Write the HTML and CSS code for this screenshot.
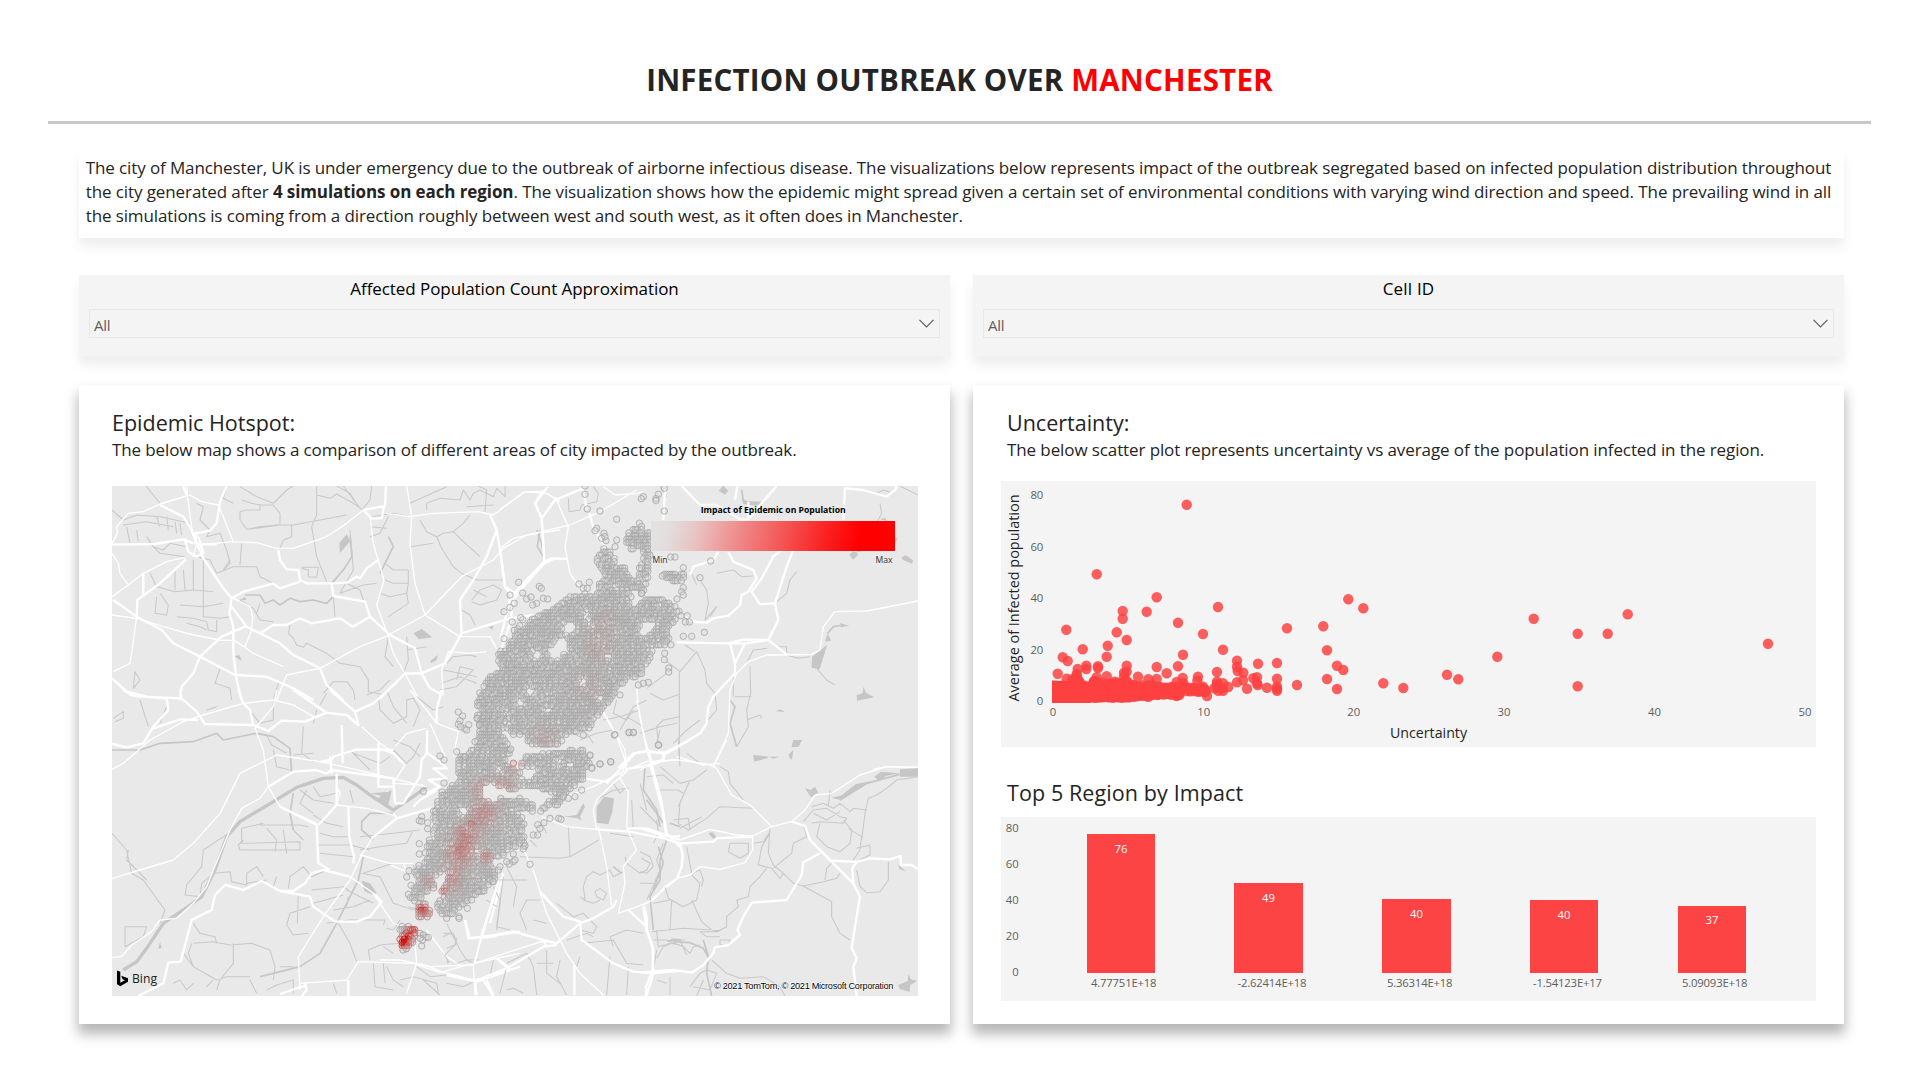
FILE: index.html
```html
<!DOCTYPE html>
<html lang="en">
<head>
<meta charset="utf-8">
<title>Infection Outbreak over Manchester</title>
<link rel="stylesheet" href="styles.css">
</head>
<body>
<header class="header">
  <h1 class="title">INFECTION OUTBREAK OVER <span class="accent">MANCHESTER</span></h1>
</header>
<main class="content">
  <section class="intro">
    <p class="intro-line">The city of Manchester, UK is under emergency due to the outbreak of airborne infectious disease. The visualizations below represents impact of the outbreak segregated based on infected population distribution throughout</p>
    <p class="intro-line middle">the city generated after <b>4 simulations on each region</b>. The visualization shows how the epidemic might spread given a certain set of environmental conditions with varying wind direction and speed. The prevailing wind in all</p>
    <p class="intro-line last">the simulations is coming from a direction roughly between west and south west, as it often does in Manchester.</p>
  </section>

  <section class="filters">
    <div class="filter">
      <h2 class="filter-title">Affected Population Count Approximation</h2>
      <div class="select"><span>All</span><svg class="chevron" viewBox="0 0 15 9"><path d="M.5.8 7.5 7.8 14.5.8"/></svg></div>
    </div>
    <div class="filter">
      <h2 class="filter-title short">Cell ID</h2>
      <div class="select"><span>All</span><svg class="chevron" viewBox="0 0 15 9"><path d="M.5.8 7.5 7.8 14.5.8"/></svg></div>
    </div>
  </section>

  <section class="panels">
    <article class="panel panel-map">
      <h2 class="heading">Epidemic Hotspot:</h2>
      <p class="sub">The below map shows a comparison of different areas of city impacted by the outbreak.</p>
      <svg class="map" viewBox="112 486 806 510">
        <defs>
          <linearGradient id="impact" x1="0" x2="1" y1="0" y2="0.03">
            <stop offset="0" stop-color="#e3e3e3"/><stop offset=".08" stop-color="#e3dede"/>
            <stop offset=".2" stop-color="#e8c2c2"/><stop offset=".34" stop-color="#ee9494"/>
            <stop offset=".47" stop-color="#f26e6e"/><stop offset=".61" stop-color="#f64545"/>
            <stop offset=".75" stop-color="#fb1c1c"/><stop offset=".87" stop-color="#f00"/>
          </linearGradient>
        </defs>
        <rect x="112" y="486" width="806" height="510" fill="#e9e9e9"/>
        <g transform="translate(60 370) scale(.33333)">
          <path class="water" d="M838,520l22,-28 10,22 -30,35zM1060,790l25,-13 32,25 -40,6zM1112,872l22,-17 -4,15 -18,10zM523,858l16,-2 6,18zM1285,770l16,-2 -4,12zM540,690l15,-10 4,10z"/>
          <path class="river" d="M555,675 600,675 615,700 640,690 660,705 690,685 720,695 760,690 800,700 820,680M870,500 876,560 850,600 815,640M985,500 1000,530 975,580 960,610M1430,480 1445,520 1453,580"/>
          <path class="lane" d="M258,348 300,400M410,400 430,410 420,450 450,480M500,348 490,385 520,400M545,390 575,400 600,405 640,405 660,430 660,465 560,478 540,450 540,425 560,420 600,420 600,405M540,350 590,380 640,400 680,360 700,348M770,348 770,435 755,470 770,560 800,635M770,375 810,385 830,372 880,400 910,420M830,348 870,370 895,410M850,348 900,415M935,348 930,390 910,415M560,478 600,470 650,465 700,465 860,435M695,465 695,500 670,510 660,535M545,520 540,585M156,420 190,450 230,435 300,440 390,460M190,465 260,455 340,470M200,470 210,520M230,480 235,515M290,440 300,470M320,440 325,480M345,455 350,490M360,460 365,495M260,500 280,530 310,540 330,520 380,530M270,520 300,550 375,560M450,480 440,500 480,490 500,540 510,580 490,600 510,570M410,560 450,570 470,610 520,590 590,590 600,620 640,640M270,610 290,650 345,665 400,660 460,665M345,600 345,660M370,600 375,660M400,570 400,660M430,570 430,740 480,745 510,740M290,680 285,730 320,735 325,705 300,670M360,705 430,710 490,700M350,740 400,745 440,755M440,755 445,780 470,785 470,750M380,760 420,770 440,780M540,690 580,715 600,750 640,755M600,700 590,730M690,765 685,790 700,805 710,825 730,832 740,820 800,850 840,880 900,890 925,930 925,965 975,975M820,680 825,740M830,640 860,640 900,660 910,690M725,595 745,600 745,620 770,622 775,592 725,592M870,480 880,600 840,670 910,645 950,640M935,440 1000,430 1050,440M930,470 980,475M930,500 960,490 985,440M975,580 1000,600 1045,600 1045,640 1040,670 1045,700 985,740M975,630 1000,640 1045,640M960,670 990,680 1040,670M1100,420 1100,400 1140,385 1200,390 1210,360 1230,390 1240,370 1260,360 1300,380 1310,355 1335,380 1335,350M1050,400 1160,350M1080,450 1100,485 1130,500 1150,490 1180,485 1210,460 1230,435M1130,500 1145,535 1180,590 1205,610 1250,630 1330,630 1335,650M1050,530 1120,520M1180,485 1205,510 1260,560M1235,690 1260,660 1300,645 1325,660 1310,690 1260,705 1235,695M1240,660 1280,680M1205,720 1230,735 1245,765M985,800 975,860 1000,890M1040,800 1045,870 1030,910M1040,840 1100,830M1160,880 1180,860 1230,855 1250,860M1150,900 1250,920M1145,940 1200,920 1250,940M1140,960 1190,950 1240,900 1200,890 1190,930M920,975 960,960 990,930M225,905 240,930 220,955 225,905M480,895 465,940 510,955 515,990M790,970 820,935 860,935 880,960 885,990M640,990 655,940 680,945M1255,348 1280,360 1275,425M1220,410 1300,405"/>
          <path class="road" d="M380,348 383,380 397,490 410,520 400,560M172,490 170,470 205,430 250,425 300,402 390,375 425,395 475,405 520,515M156,520 172,490M430,523 520,515 590,518 650,535 700,535 800,500 860,460 910,420M978,430 1050,440 1120,430 1255,425 1300,435 1395,365 1460,370 1500,395M375,562 320,575 250,610 205,645 156,680M205,645 180,610 175,580 156,550M156,735 230,745 310,770 400,795 480,810 525,812 580,850 670,890M930,440 940,520 972,630 950,705 985,800 1000,850 1035,910 1075,985M1040,348 1055,440 1050,520 1065,640 1095,735 1200,800 1290,800 1315,845M985,795 1095,735 1205,620 1300,570 1330,535 1400,495 1500,480M650,990 680,915 780,895 900,830 990,795M230,740 215,850 210,880 160,905M555,830 575,780 578,740 570,710 520,685M1150,975 1145,900 1165,845 1230,850 1280,845"/>
          <path class="main" d="M156,524 285,522 345,512 372,508 400,520M500,348 480,395 470,460 450,482 410,490 405,520 430,523 470,523M375,510 385,545 410,560 430,550 415,500M400,490 440,485M370,348 380,375M300,405 370,440 395,480 410,520 430,565 490,655 515,685M378,568 300,640 232,690 230,740M250,610 250,680M655,540 660,570 680,598 715,600 720,630 740,640 815,640 860,638 890,620 900,625 920,595 955,570M910,420 975,408 978,348M910,420 935,445 965,445 972,410M160,690 230,740 305,780 340,820 420,860 525,915 620,920 700,955 760,990M515,685 550,665 640,640 660,655 720,635M515,685 508,730 520,770 520,850 530,930 545,990M515,710 560,770 600,790 660,820 700,855 780,895 800,945 850,990M360,990 365,950 400,910 420,860 485,800 555,770M600,790 640,765 680,765 720,745 755,760 840,745 878,770 930,740 915,695 820,678 815,640M930,740 990,795 1065,835 1085,910 1110,955 1150,975M960,985 1035,910 1085,910 1155,880 1205,790 1350,745 1420,735M1290,435 1310,480 1320,540 1335,650 1365,670M1310,480 1280,560 1240,630 1200,690 1205,790M1460,355 1425,400 1445,445 1453,580 1390,650 1360,690 1350,760 1320,850M1500,565 1480,567 1453,580M156,925 200,965 260,980 360,985"/>
        </g>
        <g transform="translate(500 470) scale(.33333)">
          <path class="water" d="M656,62l14,-15 15,15 -10,12zM725,85l15,8 55,2 -25,12 -40,-5zM1140,148l14,-5 8,10zM1180,205l15,-2 -10,15zM1048,255l12,-12 15,10 -15,16zM1205,262l12,-6 22,15 -3,10 -28,-12zM1020,460l28,7 -25,5zM975,515l8,-25 10,22zM936,560l45,-35 -12,40 -10,33 -24,-5zM1070,675l18,-5 2,-20 8,18 25,14 -52,10zM828,724l12,-6 15,8zM760,858l48,5 -45,12zM808,860l30,0 -18,6zM880,812l26,-2 -10,20 -20,2zM866,862l14,-22 -4,28z"/>
          <path class="river" d="M983,490 1000,470 1030,465M725,60 730,90M120,180 112,230 130,260M975,530 968,560 950,590M690,690 705,710 690,760 710,830"/>
          <path class="lane" d="M205,85 207,125 240,120 245,105 290,95 295,70 280,50M480,50 500,80M1140,100 1145,130 1110,200 1090,240 1060,250M890,305 870,330 860,370 830,395M650,310 700,300 725,320 760,318M600,330 620,360 625,400 615,450 650,410 630,440M590,345 570,300M495,570 540,605 590,545 615,600 620,640 645,670 650,720 620,755M538,605 538,860M585,545 555,525M450,670 490,690 540,672M440,655 500,610M420,790 480,770 530,760M470,820 480,780M520,820 560,780 600,750M750,590 752,670 740,720 745,770 710,830M705,680 755,680M740,750 780,735 785,745M700,620 700,680M740,580 760,540 800,535M830,530 860,530 860,550M860,555 895,565 930,560M950,595 980,630 1005,645M350,690 340,730 380,750 400,720M310,750 360,740 420,720M1200,48 1254,75M1095,60 1130,70 1150,60 1180,70M240,810 290,790 340,780M560,850 600,880"/>
          <path class="road" d="M0,235 40,205 125,185 210,165 300,125 410,60M0,118 75,65 130,65 145,50M165,80 205,170 195,230 210,310 245,360 290,385M310,50 345,75 410,70 430,65M1254,393 1100,423 1005,425 970,470 960,540 935,553 860,555 800,555 745,575 710,610 690,660 685,790 640,890M260,640 300,710 350,800 375,870 378,900M410,650 415,710 440,840 460,900M530,860 610,885 660,880M1120,898 1160,890 1254,892"/>
          <path class="main" d="M250,55 165,90 125,145 105,100 130,60M125,145 133,275 60,350 30,390 0,510M133,275 155,265 200,267M0,235 15,350 40,385M545,48 600,105 650,105 720,148 745,148 745,95M712,48 705,90M830,48 780,105 745,148M1030,150 1035,55 1090,60 1160,80 1185,60 1190,48M685,245 700,275 760,300 770,325 745,365 725,375 720,405 685,437 640,445 620,458 585,456 550,437M880,240 860,290 825,400 780,403 755,365 785,325 820,260 845,240M825,400 835,450 805,510 735,520 685,520 530,517M685,520 730,508 805,510 860,553M690,520 705,580 705,610 640,680 625,710 620,760 600,790 500,850 440,845 400,850 355,895M735,520 705,580M570,315 580,290 640,270 655,245M490,850 490,870 455,885 375,898M268,130 280,170 320,240M250,60 260,120M490,150 495,60"/>
        </g>
        <g transform="translate(60 690) scale(.33333)">
          <path class="water" d="M960,320l35,-20 -10,45 -40,-15zM930,310l60,-5 -15,15zM905,572l25,8 20,28 -8,8 -28,-12zM300,755l5,18 -10,5zM1160,810l10,5 -8,6zM1040,648l50,12 -10,6z"/>
          <path class="canal" d="M190,840 230,815 260,775 310,700 370,660 425,620 465,540 500,440 540,395 640,335 710,292 790,265 850,262 890,285 930,315 1000,360 1060,320 1100,290"/>
          <path class="river" d="M156,180 240,180 300,160 400,155 470,130 490,150 590,130 640,140 690,175 695,250M910,500 895,570 830,700 780,790 720,830 600,860M1000,370 930,370 905,395 905,420 940,450M700,310 690,370 700,420"/>
          <path class="lane" d="M240,30 265,110M160,85 190,65 190,85 165,95M620,135 635,165 680,190M730,110 725,190 760,215M700,195 760,190M505,430 430,480 425,530 380,585 375,615 420,620 425,580 460,550 510,545 515,575 560,585 560,550 590,530 610,560M545,415 545,460 720,455 720,480 540,480 535,465 550,450M600,405 720,405 745,410M545,415 610,400M620,415 650,450 645,485M670,420 680,490M770,465 870,465 930,480M780,490 880,500M700,310 690,365 700,420 730,450M720,300 760,330 820,340M760,290 780,320 830,310M740,300 720,340 760,370M870,300 880,340M640,180 650,230 690,240M760,375 800,400 850,410M780,430 820,440 870,440M900,440 1000,430 1080,420M900,480 960,470 1040,460 1060,420M910,550 1000,520M1060,525 1080,600M560,580 620,570M650,560 640,590M685,595 690,560 730,530 755,560 800,540M755,600 850,590 865,600M760,640 850,615M820,660 880,650 930,630M860,600 940,640M865,620 860,650M715,610 712,700M750,650 690,670 680,705 700,735 745,730M800,700 870,690 975,690 970,705M835,700 870,760 890,815M400,700 420,730 465,740 470,760M400,760 460,755 510,765 575,760 630,780 645,830 640,870M395,760 385,790 400,830 470,870 500,860 570,860M520,760 520,820 480,870 470,900M570,870 590,910M370,790 400,830M460,870 440,890M660,830 700,830M156,430 200,480 215,550 250,570 300,640 315,660 300,700M195,710 260,710 250,740 195,770 195,710M205,480 200,510 260,570M340,880 360,870 380,900 400,880M620,900 650,885 700,870 700,910M820,880 830,910M930,810 925,780 960,765 1020,760M940,820 945,890 1000,900M970,820 975,880M1020,870 1060,860 1130,880 1135,910M955,20 960,60 1000,100 1040,80 1040,30 1060,25 1080,60 1060,110M980,0 1000,50 1040,100M1070,20 1120,60 1150,50M1000,180 1040,220 1060,200 1080,160M870,180 930,240M880,190 960,220 990,200M1000,150 1050,170 1080,200M1150,740 1170,730 1190,745 1185,765 1160,775M320,50 300,100M440,60 470,50M560,50 600,100 640,90 640,30M770,60 760,100M780,45 800,10M905,550 960,560 1000,640 1060,660M1160,700 1200,780 1220,810 1255,810M1020,690 1000,720 980,715"/>
          <path class="road" d="M156,238 190,220 270,150 370,95 430,75 550,40 640,30 700,45 760,80 800,70M650,0 640,50 585,115 610,180 625,290 660,350 770,400M156,565 240,540 340,510 400,460 480,370 540,250 650,195 780,215 850,230 1100,290M156,802 185,800 215,765 275,725 300,690 350,685 400,640 440,590 460,540 510,420 545,355 600,325 625,290M905,110 960,160 990,180 1035,225 1000,280 1090,285M720,900 715,800 790,680 870,570 905,495 940,440 1010,385M900,495 990,520 1060,520M990,525 1040,545 1030,520M870,560 940,610 1000,700 1060,720M720,880 860,870 895,815 1060,820 1140,848 1240,820 1310,805 1380,790M1110,100 1160,210M1080,820 1160,850 1240,870 1300,860M1065,760 1070,820 1040,910M1100,720 1160,800 1200,825M1265,745 1240,825 1245,915M1050,0 1100,60 1130,100 1195,125 1180,200M1310,740 1265,745M830,290 840,310 830,345 920,355 1000,375M1005,170 1040,130 1100,115"/>
          <path class="main" d="M190,0 220,18 320,25 325,60 280,110 250,160 200,172 156,162M360,0 365,25 410,65 435,102 580,105 625,123 665,92 735,95 800,68 860,75 895,105 885,65 810,0M700,0 800,68M280,115 360,88 415,90M535,0 550,40 570,60 580,105M985,0 940,40 885,65M845,105 848,220M780,215 815,210 820,200 890,178 1000,180M765,240 800,250 815,240 1000,265 1005,340M625,290 700,245 770,240M810,200 815,250M660,350 770,405 775,520 810,540M775,405 830,345 830,250M865,350 868,440 882,500 880,520M935,445 1010,385 1080,365 1115,355M1005,340 1030,340 1080,260 1085,210 1100,190 1102,120M1102,190 1140,215 1160,235 1120,235 1160,265 1105,270 1140,290 1100,310M1060,350 1080,330 1130,300M955,160 955,290 1000,290M870,560 790,540 755,550 735,580 700,603 660,603 605,573 550,600 495,585 465,615 455,660 395,690 362,815 325,818 310,880 235,918M660,603 750,620 760,650 825,695 890,695 930,680 965,635 940,610M735,880 740,900 725,918M865,870 865,918M1130,100 1130,60 1145,0M1215,690 1225,745 1310,735 1380,725M1160,850 1250,875 1350,840 1380,830M1310,805 1350,840M1270,870 1300,918M1330,550 1290,700M1010,385 1000,370M660,912 740,885"/>
        </g>
        <g transform="translate(380 700) scale(.33333)">
          <path class="water" d="M650,320l22,-30 30,5 -5,40 -12,38 -35,-5zM550,350l40,-5 20,-35 5,10 -15,30 5,12 -15,-8zM860,725l18,-10 -5,12z"/>
          <path class="river" d="M800,300 830,340 850,370M835,440 850,490 820,570M700,500 725,520M870,370 900,380"/>
          <path class="lane" d="M360,540 440,540M380,500 410,560 400,620M420,470 540,475 570,470 565,380M450,420 470,440M570,470 640,430 655,420M500,400 490,380M600,590 615,600 610,560 620,530 640,515 660,525 690,510 700,530 730,515M610,600 640,610 660,600M645,575 660,565 680,580 670,600 650,590 645,575M690,400 760,410M735,470 740,490 780,520 800,510 810,490 785,475M755,300 760,390M780,250 800,330M830,360 835,400 820,430M850,430 830,480 840,510 810,580 800,600M480,600 440,600 420,640 440,690M340,560 360,600 350,680 390,690M370,530 350,690M320,600 350,620M500,670 460,660M530,610 580,650 610,640 650,680 640,700 600,690M560,720 620,700 640,710M610,730 700,720 740,790 790,795M700,740 690,710 740,690 790,700M440,760 460,800 470,885M340,780 330,830M380,800 360,880M500,750 500,820 540,850M520,790 470,790M540,780 530,830 560,885M600,770 590,800M690,770 680,885M745,800 740,885M830,690 835,740 870,730 900,735M830,750 820,810M870,830 870,885M830,840 860,850M200,600 210,640M190,700 220,700 230,730 195,765 205,785M230,790 260,780 280,790M380,790 440,760M20,800 40,840 70,860M110,800 150,830 200,825M10,740 40,760M130,840 180,885M290,840 250,860 200,850M380,870 400,865 430,880M520,0 540,60M620,100 640,130M560,90 600,110M720,90 760,20 800,0M740,50 790,80M835,130 830,80 850,60 900,50M700,250 720,280 740,260M650,300 700,270 745,265"/>
          <path class="road" d="M405,395 460,510 500,640 560,760 600,820 670,885M485,350 560,380 650,388M655,380 680,500 695,620M770,0 790,100 810,185M560,290 640,260 720,220 800,185 900,180M740,180 720,235 745,275 740,380M740,385 770,450 730,500 735,550 715,640 800,610 900,530M670,35 735,150 740,200M640,330 650,300 700,250 740,215M285,790 305,700 355,545M285,790 420,745 500,720M0,780 60,780 150,800 280,795M650,390 640,330"/>
          <path class="main" d="M355,545 305,710M255,660 270,715 320,710 400,695 490,720 530,730 600,670 640,655 700,620 710,600M480,575 550,650 600,665 605,720 700,790 760,815 820,820 900,812M820,820 818,740 800,690 790,620M745,630 800,680M200,825 285,843 380,805 490,740 530,735M350,775 390,805M285,843 290,885M320,840 340,885M583,795 583,885M820,820 800,885M810,190 850,340 860,400 900,440M650,388 750,395 850,415M740,385 800,385 870,410 900,408M680,250 765,160 800,153 850,160 900,140M610,235 680,245M850,160 850,180 810,190M0,145 40,160 70,190M490,720 500,740"/>
        </g>
        <g transform="translate(640 740) scale(.33333)">
          <path class="water" d="M495,145l18,5 12,-10 10,18 -22,14zM578,175l25,5 95,-58 -50,10 -45,35 -25,5zM703,110l20,-15 55,5 -40,8 -20,15zM780,88l54,-3 0,25 -54,0zM205,280l12,-4 12,14 -8,8zM775,375l25,20 -22,-8zM215,570l30,0 -15,8zM455,20l5,-20 25,0 -10,18zM340,45l48,5 -45,14zM445,45l14,-15 -4,30zM775,735l28,-12 2,-20 8,15 18,5 -20,12 -2,20 -30,-8zM80,605l20,-10 40,5 -30,2z"/>
          <path class="river" d="M15,80 10,150 50,210 60,260M80,300 60,360 60,420 30,470 40,570M600,180 680,130 790,100M190,600 205,650 200,700 215,768M100,605 150,608 190,625 210,660"/>
          <path class="lane" d="M120,80 115,0M60,80 120,130 160,120 200,90M20,110 70,105 100,130M50,150 115,150 130,160M115,200 150,120M120,190 115,250 145,270 200,235 240,200 340,205M100,240 145,235 150,270M120,265 185,230M240,80 265,95 270,130 310,180M390,260 385,340 400,375 430,400 420,415 395,385 355,375 365,320 390,280M340,310 370,305 390,275M430,400 460,430 490,438 550,425 590,415 600,400M490,438 575,485 575,530 600,580 630,600M490,255 500,290 460,310 455,340 430,360 400,385M380,385 360,410 330,440 325,470 290,480 295,500 260,530 260,560 230,575 180,575 200,590 240,590M490,245 520,210 560,205 600,230 620,235 610,250 540,245 515,250M515,200 550,190 580,205 600,190 630,215 640,205 680,210M520,220 560,240 600,215M540,250 530,290 560,320 600,335 630,310 635,270 610,240M625,265 665,290 660,330 640,360M834,110 770,120 740,145 710,165 685,175 675,220 665,300M640,370 690,345 690,315 650,325M650,390 660,440 680,458 720,455 745,420 745,365M555,420 560,385 580,365M270,310 265,335 300,355 325,340 325,310 270,310M140,320 155,400 180,390 190,420 185,440M75,440 85,475 130,500 170,480 180,430 155,405M95,480 90,570M40,490 90,480M35,575 130,565 210,570M155,480 185,545 215,570M40,600 80,600 130,620 150,640 160,620 180,615M50,655 70,620 120,600 140,645M215,660 260,700 300,715 370,710 420,740 435,768M150,740 180,700 200,690 230,700 210,750 160,740M170,768 190,720M0,335 30,350 40,380 20,400 0,395M0,430 40,430M0,200 40,240 60,260M240,600 270,600 265,615 240,615 240,600M570,150 565,200"/>
          <path class="road" d="M0,90 40,70 100,58 200,72 230,85 275,165 330,195 395,260 455,245 495,210 525,165 575,160 660,105 740,80 834,82M220,80 260,0M120,300 210,268 290,285 338,288 395,260M338,288 338,330 315,368 240,388 180,380 150,405 110,415 75,440 40,480 0,497M15,0 40,75"/>
          <path class="main" d="M0,35 75,38 150,0M75,38 70,58 35,75 65,185 78,285 120,300M0,265 50,280 80,298 120,310 220,305 230,295 338,290M120,310 128,345 125,380 112,412M12,497 20,530 20,570 40,630 38,690 18,740 18,768M0,697 100,690 155,698 190,675 220,640 225,622 265,615 300,585 292,570 310,530 335,488 440,480 485,405 490,367 540,340M455,245 495,258 510,300 545,335 580,370 640,430 660,470 645,560 635,625 650,655 640,680 650,768M575,362 650,366 690,355 750,358 782,348 783,375 815,375 834,387M650,366 637,385 640,430"/>
        </g>
        <g id="cells"></g>
        <text x="700.7" y="513.2" class="map-legend-title" textLength="145" lengthAdjust="spacingAndGlyphs">Impact of Epidemic on Population</text>
        <rect x="651" y="521" width="244" height="30" fill="url(#impact)"/>
        <text x="652.5" y="563.3" class="map-legend" textLength="15" lengthAdjust="spacingAndGlyphs">Min</text>
        <text x="875.5" y="563.3" class="map-legend" textLength="17" lengthAdjust="spacingAndGlyphs">Max</text>
        <path d="M117 970.6l3.300 1.200v11l4.500-2.500-2.200-1.100-1.400-3.400 6.800 2.400v3.600l-7.700 4.400-3.300-1.900z"/>
        <text x="132" y="983.4" class="bing" textLength="25" lengthAdjust="spacingAndGlyphs">Bing</text>
        <text x="714" y="989" class="copyright" textLength="179.500" lengthAdjust="spacing">© 2021 TomTom, © 2021 Microsoft Corporation</text>
      </svg>
    </article>

    <article class="panel panel-charts">
      <h2 class="heading">Uncertainty:</h2>
      <p class="sub">The below scatter plot represents uncertainty vs average of the population infected in the region.</p>
      <svg class="scatter" viewBox="1001 481 815 266">
        <clipPath id="plot"><rect x="1052" y="485" width="765" height="217.600"/></clipPath>
        <g class="tick end">
          <text x="1043.300" y="499.200">80</text><text x="1043.300" y="551">60</text><text x="1043.300" y="602.300">40</text><text x="1043.300" y="654.200">20</text><text x="1043.300" y="705.400">0</text>
        </g>
        <g class="tick mid">
          <text x="1053" y="716.300">0</text><text x="1203.700" y="716.300">10</text><text x="1353.700" y="716.300">20</text><text x="1504" y="716.300">30</text><text x="1654.500" y="716.300">40</text><text x="1805" y="716.300">50</text>
        </g>
        <g id="dots" clip-path="url(#plot)"></g>
        <text class="axis" x="1390" y="737.700" textLength="77" lengthAdjust="spacingAndGlyphs">Uncertainty</text>
        <text class="axis" transform="translate(1019 701.500) rotate(-90)" textLength="207" lengthAdjust="spacingAndGlyphs">Average of Infected population</text>
      </svg>
      <h2 class="heading second">Top 5 Region by Impact</h2>
      <svg class="bars" viewBox="1001 817 815 184">
        <g class="tick end">
          <text x="1018.700" y="832.200">80</text><text x="1018.700" y="868.200">60</text><text x="1018.700" y="904.200">40</text><text x="1018.700" y="940.200">20</text><text x="1018.700" y="976.200">0</text>
        </g>
        <g class="bar">
          <rect x="1087" y="834" width="68" height="139"/><rect x="1234" y="883" width="69" height="90"/><rect x="1382" y="899" width="69" height="74"/><rect x="1530" y="900" width="68" height="73"/><rect x="1678" y="906" width="68" height="67"/>
        </g>
        <g class="tick mid value">
          <text x="1121" y="853.300">76</text><text x="1268.500" y="902.300">49</text><text x="1416.500" y="918.300">40</text><text x="1564" y="919.300">40</text><text x="1712" y="924.300">37</text>
        </g>
        <g class="tick">
          <text x="1091" y="987.300" textLength="65.500">4.77751E+18</text><text x="1237.500" y="987.300" textLength="69">-2.62414E+18</text><text x="1387" y="987.300" textLength="65.500">5.36314E+18</text><text x="1533" y="987.300" textLength="69">-1.54123E+17</text><text x="1682" y="987.300" textLength="65.500">5.09093E+18</text>
        </g>
      </svg>
    </article>
  </section>
</main>
<script src="charts.js"></script>
</body>
</html>
```
FILE: styles.css
```css
* { box-sizing: border-box; }
body {
  margin: 0;
  width: 1920px;
  height: 1080px;
  overflow: hidden;
  background: #fff;
  color: #252423;
  font-family: "Open Sans", "Noto Sans", sans-serif;
}
h1, h2, p { margin: 0; font-weight: 400; white-space: nowrap; }
.header {
  height: 124px;
  margin: 0 49px 0 48px;
  padding-top: 60px;
  border-bottom: 3px solid #c8c8c8;
}
.title { text-align: center; font-size: 29.5px; line-height: 40px; font-weight: 700; letter-spacing: .22px; }
.accent { color: #f00; }
.content { margin: 0 76px 0 79px; }
.intro {
  height: 88px;
  margin-top: 26px;
  padding: 6px 12px 0 6.700px;
  box-shadow: 0 9px 11px rgba(0, 0, 0, .07);
}
.intro-line { font-size: 17px; line-height: 24px; letter-spacing: -.109px; }
.intro-line.middle { letter-spacing: -.096px; }
.intro-line.last { letter-spacing: -.11px; }
.filters, .panels { display: grid; grid-template-columns: 871px 871px; gap: 23px; }
.filters { margin-top: 37px; }
.filter {
  height: 81px;
  padding: 2px 10px 0;
  background: #f4f4f4;
  box-shadow: 0 9px 11px rgba(0, 0, 0, .07);
}
.filter-title { color: #000; text-align: center; font-size: 17px; line-height: 24px; letter-spacing: -.07px; }
.filter-title.short { letter-spacing: .2px; }
.select {
  display: flex;
  align-items: center;
  justify-content: space-between;
  height: 29px;
  margin-top: 8px;
  padding: 2px 5px 0 4px;
  border: 1px solid #e8e8e8;
  color: #605e5c;
  font-size: 15px;
  letter-spacing: -.2px;
}
.chevron { width: 15px; height: 9px; margin-top: -2px; fill: none; stroke: #605e5c; stroke-width: 1.2; }
.panels { margin-top: 29px; }
.panel {
  height: 639px;
  padding: 24px 28px 0 33px;
  background: #fff;
  box-shadow: 0 9px 12px 1px rgba(0, 0, 0, .29);
}
.heading { font-size: 21.5px; line-height: 28px; }
.sub { margin-top: 1px; font-size: 17px; line-height: 24px; letter-spacing: -.115px; }
.map { display: block; width: 806px; height: 510px; margin-top: 24px; }
.panel-charts { padding-left: 32px; }
.panel-charts .heading, .panel-charts .sub { padding-left: 2px; }
.panel-charts .sub { letter-spacing: -.105px; }
.scatter { display: block; width: 815px; height: 266px; margin: 19px 0 0 -4px; background: #f4f4f4; }
.heading.second { margin-top: 32px; letter-spacing: .1px; }
.bars { display: block; width: 815px; height: 184px; margin: 10px 0 0 -4px; background: #f4f4f4; }

.map path { stroke-linejoin: round; }
.lane { fill: none; stroke: #c9c9c9; stroke-width: 3.2; }
.river { fill: none; stroke: #c6c6c6; stroke-width: 5; }
.canal { fill: none; stroke: #c6c6c6; stroke-width: 10; }
.water { fill: #c6c6c6; }
.road { fill: none; stroke: #fff; stroke-width: 4; }
.main { fill: none; stroke: #fff; stroke-width: 7; }
.map-legend-title { font-size: 9px; font-weight: 700; }
.map-legend { font-size: 9.500px; fill: #333; }
.bing { font-size: 13px; fill: #222; }
.copyright { font-family: "Liberation Sans", Arial, sans-serif; font-size: 9.300px; paint-order: stroke; stroke: #fff; stroke-width: 1px; }

.tick { font-size: 11.3px; fill: #605e5c; }
.end { text-anchor: end; }
.mid { text-anchor: middle; }
.tick.value { fill: #fff; }
.axis { font-size: 14px; fill: #252423; }
.bar { fill: #fd4444; }
#dots circle { fill: #fd4040; fill-opacity: .84; }
```
FILE: charts.js
```javascript
var NS = 'http://www.w3.org/2000/svg';
var seed = 7;
function rnd() { seed = (seed * 16807) % 2147483647; return seed / 2147483647; }
function circle(parent, x, y, r, attrs) {
  var c = document.createElementNS(NS, 'circle');
  c.setAttribute('cx', x.toFixed(1)); c.setAttribute('cy', y.toFixed(1)); c.setAttribute('r', r);
  for (var k in attrs) c.setAttribute(k, attrs[k]);
  parent.appendChild(c);
}

// Regions covered by infected cells: [origin x, origin y, polygon in thirds of a pixel]
var north = [500, 470, [384,190,425,160,450,190,450,260,436,368,420,370,405,355,392,398,480,382,515,392,530,440,512,470,510,525,450,528,458,550,436,600,395,635,365,648,328,698,296,735,274,770,200,798,180,826,85,826,65,790,20,800,0,845,-55,850,-70,690,-45,630,2,600,-5,548,32,525,50,474,102,444,180,405,212,375,290,374,310,320,288,260,302,238,338,245,346,284,395,303,430,285,430,240,400,242,373,210]];
var south = [380, 700, [320,0,480,0,440,60,425,100,380,110,392,148,380,190,420,220,436,260,400,270,360,260,330,240,298,255,308,298,360,313,430,347,437,437,388,446,328,486,356,518,308,570,268,598,208,650,176,636,173,600,188,570,214,520,192,507,148,538,166,558,121,583,156,638,140,660,117,648,113,620,84,585,112,558,104,520,134,470,154,400,163,340,184,282,242,232,224,174,282,144,313,60]];
var areas = [north, south,
  [380,700,[432,168,538,158,542,152,608,148,630,190,605,238,576,258,538,316,472,340,483,320,543,278,445,262,442,240,485,212,432,193]],
  [380,700,[357,292,438,293,460,315,453,332,400,323,357,304]],
  [380,700,[46,686,78,678,110,694,102,734,75,746,46,734]],
  [380,700,[392,187,555,184,555,208,480,208,402,195]],
  [500,470,[490,310,552,304,552,342,502,328]]];
var holes = [[570,628,7.5],[562,645,8],[556,652,8],[537,655,6],[645,630,7],[652,625,5],[633,571,7],[637,562,5],[463,810,5.5],[477,852,4],[442,880,5],[570,765,5],[505,733,5],[584,681,5],[600,698,5],[548,710,4],[530,692,5],[614,586,4],[586,616,4],[500,770,4],[438,895,4],[520,703,5]];
function inside(px, py, a) {
  var x = (px - a[0]) * 3, y = (py - a[1]) * 3, p = a[2], hit = false;
  for (var i = 0, j = p.length - 2; i < p.length; j = i, i += 2) {
    if ((p[i + 1] > y) !== (p[j + 1] > y) && x < (p[j] - p[i]) * (y - p[i + 1]) / (p[j + 1] - p[i + 1]) + p[i]) hit = !hit;
  }
  return hit;
}
// Hot zones: x, y, radius, strength
var hot = [[404,943,4,1.3],[408,937,5,.9],[414,931,5,.5],[424,912,6,.4],[422,910,3,.4],[443,893,5,.25],[473,825,2,.7],[452,880,11,.18],[460,855,12,.22],[466,838,12,.22],[484,815,14,.17],[486,858,6,.22],[430,883,7,.12],[515,764,6,.28],[502,788,12,.13],[482,790,9,.12],[545,740,12,.07],[605,625,14,.05],[598,650,14,.06],[590,690,16,.05]];
function heat(x, y) {
  return Math.min(1, hot.reduce(function (s, h) {
    var d = ((x - h[0]) * (x - h[0]) + (y - h[1]) * (y - h[1])) / (h[2] * h[2]);
    return s + h[3] * Math.exp(-d);
  }, 0));
}
var cells = document.getElementById('cells');
function cell(x, y) {
  var h = Math.min(1, heat(x, y) * (.6 + .8 * rnd()));
  var f = Math.round(215 * (1 - h)), g = Math.round(162 * (1 - h));
  circle(cells, x, y, 3.2, {
    fill: 'rgba(' + (h > .1 ? 222 : 215) + ',' + f + ',' + f + ',.3)',
    stroke: 'rgba(' + Math.round(162 + 45 * h) + ',' + g + ',' + g + ',.8)', 'stroke-width': .95
  });
}
for (var y = 520; y < 950; y += 3.2) {
  for (var x = 400; x < 690; x += 2.1) {
    if (rnd() > .68) continue;
    var jx = x + (rnd() - .5) * 3, jy = y + (rnd() - .5) * 3;
    if (!areas.some(function (a) { return inside(jx, jy, a); })) continue;
    if (holes.some(function (h) { return Math.hypot(x - h[0], y - h[1]) < h[2]; })) continue;
    cell(x, y);
  }
}
function scatterCells(ox, oy, list) {
  for (var i = 0; i < list.length; i += 2) cell(ox + list[i] / 3, oy + list[i + 1] / 3);
}
scatterCells(500, 470, [255,48,255,73,262,117,300,123,350,148,430,80,424,86,475,73,468,86,468,92,493,55,493,123,290,175,285,182,312,190,305,205,318,212,350,210,315,200,345,230,632,273,512,261,525,261,550,293,600,323,487,318,237,342,268,337,250,355,262,355,56,337,30,375,68,369,43,400,30,412,12,425,118,349,124,355,80,387,93,381,130,385,143,387,110,400,98,405,37,456,12,506,62,443,68,449,43,481,550,353,545,365,550,375,531,387,425,369,537,424,543,437,562,437,568,456,556,456,575,499,550,499,613,487,493,569,506,594,506,606,494,550,343,795,387,788,400,788,476,825,300,882,332,876,270,857,276,893,250,795,445,637,430,640,415,645,360,675,525,410,530,425]);
scatterCells(380, 700, [235,36,248,48,240,62,235,73,242,80,254,86,266,74,260,90,291,55,298,75,310,86,360,61,180,168,192,180,192,249,130,274,125,350,118,362,125,364,143,386,143,368,118,431,118,462,80,531,93,556,87,512,705,104,747,97,760,97,835,135,660,192,692,185,630,165,635,205,605,270,585,290,536,355,543,358,510,355,492,368,473,374,480,385,460,405,473,405,435,437,430,447,400,462,400,485,388,492,405,480,380,485,450,493,355,510,330,540,340,545,295,575,312,573,275,600,262,625,237,650,237,655,200,655,125,738,69,750,120,700,130,705,138,712,128,720,145,712,120,715,370,465,360,500,255,170,230,155,285,125,392,148,565,295,550,290]);

// Uncertainty scatter: positions in thirds of a pixel from (980, 470)
var dots = document.getElementById('dots');
var pts = [620,104,350,313,530,382,428,423,428,446,500,425,714,411,594,458,259,479,410,487,440,510,669,492,921,475,1030,469,1105,388,1150,415,383,527,308,538,380,560,248,562,263,573,729,539,609,554,1041,541,1041,627,1071,587,1090,600,1071,657,1210,640,1270,654,1401,614,1435,628,1552,560,1661,446,1793,491,1883,491,1943,433,2364,521,1793,649,951,645,891,579,891,626,891,650,891,656,891,662,834,581,771,572,771,590,773,603,790,608,789,631,771,637,801,656,861,653,831,622,820,625,831,640,833,645,711,606,711,635,711,642,711,650,729,640,729,662,745,651,560,610,594,589,530,591,530,627,440,587,440,605,432,608,354,589,354,594,319,587,319,597,293,597,233,611,290,612,290,618,380,619,474,620,654,620,652,632,608,624,260,626,505,628,681,678,669,650,669,660,590,678,654,665,728,653,703,655,715,662,590,636,610,640,640,655,625,658,350,622,432,620,437,630,404,635];
for (var i = 0; i < pts.length; i += 2) circle(dots, 980 + pts[i] / 3, 470 + pts[i + 1] / 3, 5.2);
function fill(x0, x1, y0, y1, n) {
  for (var k = 0; k < n; k++) circle(dots, 980 + (x0 + rnd() * (x1 - x0)) / 3, 470 + (y0 + rnd() * (y1 - y0)) / 3, 5.2);
}
fill(216, 320, 646, 700, 330);
fill(320, 445, 650, 682, 230);
fill(340, 380, 630, 686, 35);
fill(275, 300, 625, 660, 20);
fill(395, 450, 635, 685, 60);
fill(445, 520, 645, 680, 80);
fill(520, 600, 650, 675, 60);
fill(580, 680, 652, 666, 25);
```
